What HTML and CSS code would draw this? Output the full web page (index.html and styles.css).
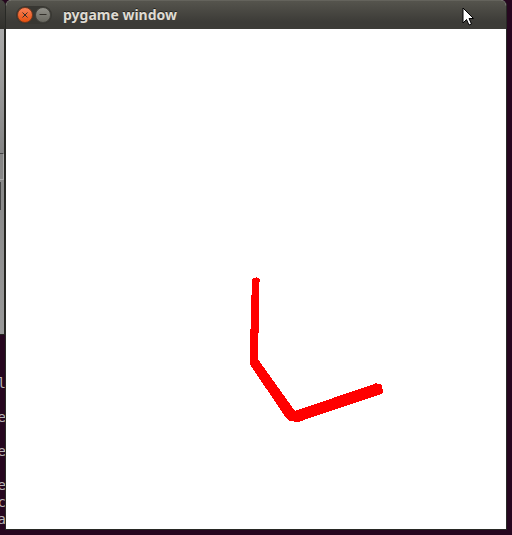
FILE: index.html
```html
<!DOCTYPE html>
<html lang="en">
<head>
<meta charset="utf-8">
<title>pygame window</title>
<link rel="stylesheet" href="styles.css">
</head>
<body>
<div class="desktop">
  <div class="terminal">
    <span>l</span><span></span><span>e</span><span></span><span>e</span><span></span><span>e</span><span>c</span><span>a</span>
  </div>
  <div class="back-window">
    <div class="back-title"></div>
    <div class="back-body">
      <div class="back-pane"></div>
      <div class="back-field"></div>
    </div>
  </div>
  <main class="window">
    <header class="titlebar">
      <div class="controls">
        <button class="control close" type="button" aria-label="Close">
          <svg viewBox="0 0 14 14"><path d="M4.500 4.500l5 5M9.500 4.500l-5 5"/></svg>
        </button>
        <button class="control" type="button" aria-label="Minimize">
          <svg viewBox="0 0 14 14"><path d="M3.500 6.500h7"/></svg>
        </button>
      </div>
      <h1 class="title">pygame window</h1>
    </header>
    <svg class="canvas" viewBox="0 0 500 500" shape-rendering="crispEdges" role="img" aria-label="Three joined red segments">
      <path fill="#f00" d="M246 250L247 249H249L250 248L251 249H253L254 251V253H253V303L252 304V331L254 333L289 382L368 355L370 354L371 355H375L376 357V360L377 361V364L375 365L298 391L292 393H288L287 392H283L281 390L276 383L245 337L244 334V318L245 283Z"/>
    </svg>
  </main>
  <svg class="pointer" viewBox="0 0 12 20" aria-hidden="true">
    <path d="M1 1V16L4.500 12.500L7 18L9.500 17L7 11.500H11.500Z" fill="#fff" stroke="#000"/>
  </svg>
</div>
</body>
</html>
```
FILE: styles.css
```css
* {
  box-sizing: border-box;
}

body {
  margin: 0;
  background: #26071f;
}

.desktop {
  position: relative;
  min-height: 100vh;
  padding: 0 5px 5px;
  overflow: hidden;
  background: #26071f;
}

.window {
  position: relative;
  border: 1px solid #282925;
  border-top: 0;
  border-radius: 6px 6px 0 0;
  background: #fff;
  overflow: hidden;
}

.titlebar {
  display: flex;
  align-items: center;
  gap: 11px;
  height: 29px;
  padding: 0 10px;
  border-top: 1px solid #64635c;
  background: linear-gradient(#55544d, #3c3b37 75%);
}

.controls {
  display: flex;
  gap: 2px;
  padding: 1px;
  border-radius: 9px;
  background: #383732;
}

.control {
  width: 16px;
  height: 16px;
  padding: 0;
  border: 1px solid #43423c;
  border-radius: 50%;
  background: linear-gradient(#92918a, #696860);
}

.close {
  border-color: #75391f;
  background: linear-gradient(#fa8157, #e7510f);
}

.control svg {
  display: block;
  width: 14px;
  height: 14px;
  fill: none;
  stroke: #33302b;
  stroke-width: 1;
}

.title {
  margin: 0;
  color: #dfdbd2;
  font: bold 14px/20px "Noto Sans", "Open Sans", sans-serif;
  text-shadow: 0 -1px #25241f;
}

.canvas {
  display: block;
  width: 100%;
}

.pointer {
  position: absolute;
  top: 7px;
  right: 38px;
  width: 12px;
  height: 20px;
}

.back-window {
  position: absolute;
  top: 0;
  left: 0;
  width: 5px;
  height: 335px;
  border-bottom: 1px solid #242420;
  border-radius: 0 5px 0 0;
  overflow: hidden;
  background: #242420;
}

.back-title {
  height: 29px;
  background: linear-gradient(#464540, #31302c);
}

.back-body {
  width: 4px;
  height: 305px;
  padding-top: 124px;
  background: linear-gradient(#aaa, #858585 40%, #999);
}

.back-pane {
  height: 27px;
  border: 1px solid #aaa;
  border-top-color: #444;
  border-left: 0;
}

.back-field {
  width: 1px;
  height: 28px;
  margin-top: 2px;
  background: #444;
}

.terminal {
  position: absolute;
  top: 375px;
  left: 0;
  display: flex;
  flex-direction: column;
  align-items: flex-end;
  width: 6px;
  overflow: hidden;
  color: #b8b5b5;
  font: 14px/17px "DejaVu Sans Mono", monospace;
}

.terminal span {
  height: 17px;
}
```
